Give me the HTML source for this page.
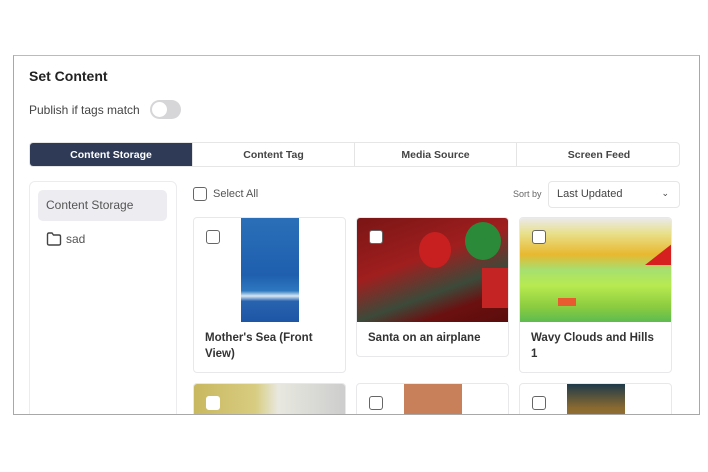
<!DOCTYPE html>
<html><head><style>
*{box-sizing:border-box;margin:0;padding:0}
body{width:708px;height:472px;background:#fff;font-family:"Liberation Sans",sans-serif;position:relative;overflow:hidden;color:#222}
.abs{position:absolute}
.frame{left:13px;top:55px;width:687px;height:360px;border:1.5px solid #a8a8a8;border-top-color:#bbb;overflow:hidden}
.cb{position:absolute;width:14px;height:14px;border:1.5px solid #666;border-radius:3px;background:#fff}
.card{position:absolute;border:1px solid #e8e8ea;border-radius:4px;background:#fff;overflow:hidden}
.card .t{position:absolute;left:11px;top:112px;font-size:11.5px;font-weight:bold;line-height:16px;color:#333}
.tab{position:absolute;top:0;height:24px;line-height:24px;text-align:center;font-size:10.5px;font-weight:bold;color:#444;border-right:1px solid #e4e4e4}
</style></head><body>
<div class="abs frame">
 <div class="abs" style="left:15px;top:12px;font-size:14px;font-weight:bold;color:#222">Set Content</div>
 <div class="abs" style="left:15px;top:47px;font-size:12px;color:#444">Publish if tags match</div>
 <div class="abs" style="left:136px;top:44px;width:31px;height:19px;border-radius:10px;background:#d6d6d9"></div>
 <div class="abs" style="left:138px;top:46px;width:15px;height:15px;border-radius:50%;background:#fff"></div>
 <div class="abs" style="left:15px;top:86px;width:651px;height:25px;border:1px solid #e6e6e6;border-radius:4px;overflow:hidden">
  <div class="tab" style="left:0;width:163px;background:#2f3a56;color:#fff">Content Storage</div>
  <div class="tab" style="left:163px;width:162px">Content Tag</div>
  <div class="tab" style="left:325px;width:162px">Media Source</div>
  <div class="tab" style="left:487px;width:164px;border:none">Screen Feed</div>
 </div>
 <div class="abs" style="left:15px;top:125px;width:148px;height:260px;border:1px solid #ececef;border-radius:6px">
  <div class="abs" style="left:8px;top:8px;width:129px;height:31px;background:#ececf1;border-radius:5px;font-size:12px;color:#555;line-height:31px;padding-left:8px">Content Storage</div>
  <svg class="abs" style="left:16px;top:50px" width="16" height="14" viewBox="0 0 16 14"><path d="M1.5 2.5 Q1.5 1 3 1 H6 L7.5 3 H13 Q14.5 3 14.5 4.5 V11.5 Q14.5 13 13 13 H3 Q1.5 13 1.5 11.5 Z" fill="none" stroke="#444" stroke-width="1.4"/></svg>
  <div class="abs" style="left:36px;top:50px;font-size:12px;color:#555">sad</div>
 </div>
 <div class="cb" style="left:179px;top:131px"></div>
 <div class="abs" style="left:199px;top:132px;font-size:11px;color:#555">Select All</div>
 <div class="abs" style="left:499px;top:133px;font-size:9px;color:#666">Sort by</div>
 <div class="abs" style="left:534px;top:125px;width:132px;height:27px;border:1px solid #e6e6e6;border-radius:4px;font-size:11px;color:#444;line-height:25px;padding-left:8px">Last Updated<span style="position:absolute;right:10px;top:-1px;font-size:9px">&#8964;</span></div>
 <div class="card" style="left:179px;top:161px;width:153px;height:156px">
  <div class="abs" style="left:47px;top:0;width:58px;height:104px;background:linear-gradient(#2a6fb8,#1f5fae 55%,#2e78c0 70%,#d8e8f4 75%,#2863b0 80%,#1d56a4)"></div>
  <div class="cb" style="left:12px;top:12px"></div>
  <div class="t">Mother's Sea (Front<br>View)</div>
 </div>
 <div class="card" style="left:342px;top:161px;width:153px;height:140px">
  <div class="abs" style="left:0;top:0;width:153px;height:104px;background:linear-gradient(160deg,#7a1515,#a01e1e 40%,#3c4a3a 65%,#6b1010 80%,#5a0c0c)"></div>
  <div class="abs" style="left:62px;top:14px;width:32px;height:36px;border-radius:50%;background:#c82020"></div>
  <div class="abs" style="left:108px;top:4px;width:36px;height:38px;border-radius:50%;background:#2a8a3a"></div>
  <div class="abs" style="left:125px;top:50px;width:28px;height:40px;background:#c42424"></div>
  <div class="cb" style="left:12px;top:12px"></div>
  <div class="t">Santa on an airplane</div>
 </div>
 <div class="card" style="left:505px;top:161px;width:153px;height:156px">
  <div class="abs" style="left:0;top:0;width:153px;height:104px;background:linear-gradient(#eaeaea 0%,#e8e08a 15%,#e8b830 35%,#a6e070 50%,#b8ea50 65%,#8ccc40 85%,#5cbc50)"></div>
  <div class="abs" style="left:125px;top:25px;width:28px;height:22px;background:#d62020;clip-path:polygon(100% 0,100% 100%,0 100%)"></div>
  <div class="abs" style="left:38px;top:80px;width:18px;height:8px;background:#e85a30"></div>
  <div class="cb" style="left:12px;top:12px"></div>
  <div class="t">Wavy Clouds and Hills<br>1</div>
 </div>
 <div class="card" style="left:179px;top:327px;width:153px;height:60px">
  <div class="abs" style="left:0;top:0;width:153px;height:60px;background:linear-gradient(90deg,#c8b860,#d8cc80 40%,#e8e8e0 55%,#ccc)"></div>
  <div class="cb" style="left:12px;top:12px;border-color:#fff"></div>
 </div>
 <div class="card" style="left:342px;top:327px;width:153px;height:60px">
  <div class="abs" style="left:47px;top:0;width:58px;height:60px;background:#c8805a"></div>
  <div class="cb" style="left:12px;top:12px"></div>
 </div>
 <div class="card" style="left:505px;top:327px;width:153px;height:60px">
  <div class="abs" style="left:47px;top:0;width:58px;height:60px;background:linear-gradient(#1e3a4a,#8a6a30 40%,#b08040)"></div>
  <div class="cb" style="left:12px;top:12px"></div>
 </div>
</div>
</body></html>
